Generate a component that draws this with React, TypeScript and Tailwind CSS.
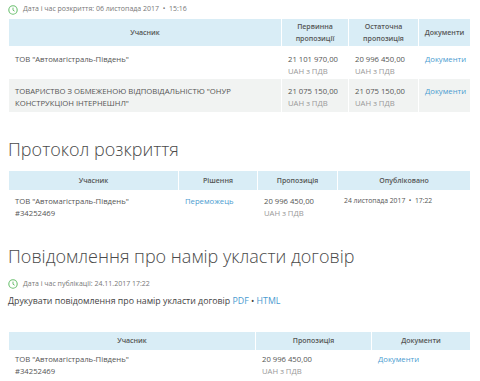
import React from "react";

const Clock = () => (
  <svg width="10" height="10" viewBox="0 0 10 10" className="shrink-0">
    <circle cx="5" cy="5" r="4.2" fill="none" stroke="#6cc070" strokeWidth="1.1" />
    <path d="M5 2.6V5.2L6.6 6.2" fill="none" stroke="#6cc070" strokeWidth="1" />
  </svg>
);

const th = "bg-[#d9edf6] border border-white text-[7px] font-semibold text-[#555] text-center align-middle leading-[12px] px-1";
const tdBase = "border border-white text-[#555] align-top px-[6px]";
const td = tdBase + " text-[7.7px] leading-[12px]";
const link = "text-[#4a9bd0]";
const sub = "text-[#999]";

export default function App() {
  return (
    <div className="w-[480px] h-[381px] overflow-hidden bg-white" style={{ fontFamily: '"Open Sans", sans-serif' }}>
      <div className="flex items-center gap-[5px] pl-[8px] pt-[3px] h-[16px] text-[7px] text-[#777]">
        <Clock />
        <span>Дата і час розкриття: 06 листопада 2017 &nbsp;•&nbsp; 15:16</span>
      </div>
      <div className="px-[8px] mt-[2px]">
        <table className="w-[462px] border-collapse table-fixed">
          <colgroup>
            <col className="w-[273px]" />
            <col className="w-[67px]" />
            <col className="w-[70px]" />
            <col className="w-[52px]" />
          </colgroup>
          <thead>
            <tr className="h-[28px]">
              <th className={th}>Учасник</th>
              <th className={th}>Первинна<br />пропозиції</th>
              <th className={th}>Остаточна<br />пропозиція</th>
              <th className={th}>Документи</th>
            </tr>
          </thead>
          <tbody>
            <tr className="h-[32px]">
              <td className={td + " pt-[6px]"}>ТОВ "Автомагістраль-Південь"</td>
              <td className={td + " pt-[6px]"}>21 101 970,00<br /><span className={sub}>UAH з ПДВ</span></td>
              <td className={td + " pt-[6px]"}>20 996 450,00<br /><span className={sub}>UAH з ПДВ</span></td>
              <td className={td + " pt-[6px]"}><span className={link}>Документи</span></td>
            </tr>
            <tr className="h-[34px] bg-[#f1f3f2]">
              <td className={td + " pt-[6px]"}>ТОВАРИСТВО З ОБМЕЖЕНОЮ ВІДПОВІДАЛЬНІСТЮ "ОНУР<br />КОНСТРУКЦІОН ІНТЕРНЕШНЛ"</td>
              <td className={td + " pt-[6px]"}>21 075 150,00<br /><span className={sub}>UAH з ПДВ</span></td>
              <td className={td + " pt-[6px]"}>21 075 150,00<br /><span className={sub}>UAH з ПДВ</span></td>
              <td className={td + " pt-[6px]"}><span className={link}>Документи</span></td>
            </tr>
          </tbody>
        </table>
      </div>

      <h2 className="pl-[8px] mt-[24px] text-[18px] leading-[24px] font-light text-[#4a4a4a]">Протокол розкриття</h2>
      <div className="px-[8px] mt-[9px]">
        <table className="w-[462px] border-collapse table-fixed">
          <colgroup>
            <col className="w-[170px]" />
            <col className="w-[79px]" />
            <col className="w-[80px]" />
            <col className="w-[133px]" />
          </colgroup>
          <thead>
            <tr className="h-[20px]">
              <th className={th}>Учасник</th>
              <th className={th}>Рішення</th>
              <th className={th}>Пропозиція</th>
              <th className={th}>Опубліковано</th>
            </tr>
          </thead>
          <tbody>
            <tr className="h-[34px]">
              <td className={td + " pt-[4px]"}>ТОВ "Автомагістраль-Південь"<br />#34252469</td>
              <td className={td + " pt-[4px]"}><span className={link}>Переможець</span></td>
              <td className={td + " pt-[4px]"}>20 996 450,00<br /><span className={sub}>UAH з ПДВ</span></td>
              <td className={tdBase + " pt-[4px] text-[6.8px] leading-[12px]"}>24 листопада 2017 &nbsp;•&nbsp; 17:22</td>
            </tr>
          </tbody>
        </table>
      </div>

      <h2 className="pl-[8px] mt-[19px] text-[18px] leading-[24px] font-light text-[#4a4a4a]">Повідомлення про намір укласти договір</h2>
      <div className="flex items-center gap-[5px] pl-[8px] mt-[10px] h-[12px] text-[7px] text-[#777]">
        <Clock />
        <span>Дата і час публікації: 24.11.2017 17:22</span>
      </div>
      <div className="pl-[8px] mt-[4px] text-[8.8px] leading-[14px] text-[#444]">
        Друкувати повідомлення про намір укласти договір <span className={link}>PDF</span> • <span className={link}>HTML</span>
      </div>
      <div className="px-[8px] mt-[23px]">
        <table className="w-[462px] border-collapse table-fixed">
          <colgroup>
            <col className="w-[247px]" />
            <col className="w-[116px]" />
            <col className="w-[99px]" />
          </colgroup>
          <thead>
            <tr className="h-[19px]">
              <th className={th}>Учасник</th>
              <th className={th}>Пропозиція</th>
              <th className={th}>Документи</th>
            </tr>
          </thead>
          <tbody>
            <tr className="h-[34px]">
              <td className={td + " pt-[2px]"}>ТОВ "Автомагістраль-Південь"<br />#34252469</td>
              <td className={td + " pt-[2px]"}>20 996 450,00<br /><span className={sub}>UAH з ПДВ</span></td>
              <td className={td + " pt-[2px]"}><span className={link}>Документи</span></td>
            </tr>
          </tbody>
        </table>
      </div>
    </div>
  );
}
